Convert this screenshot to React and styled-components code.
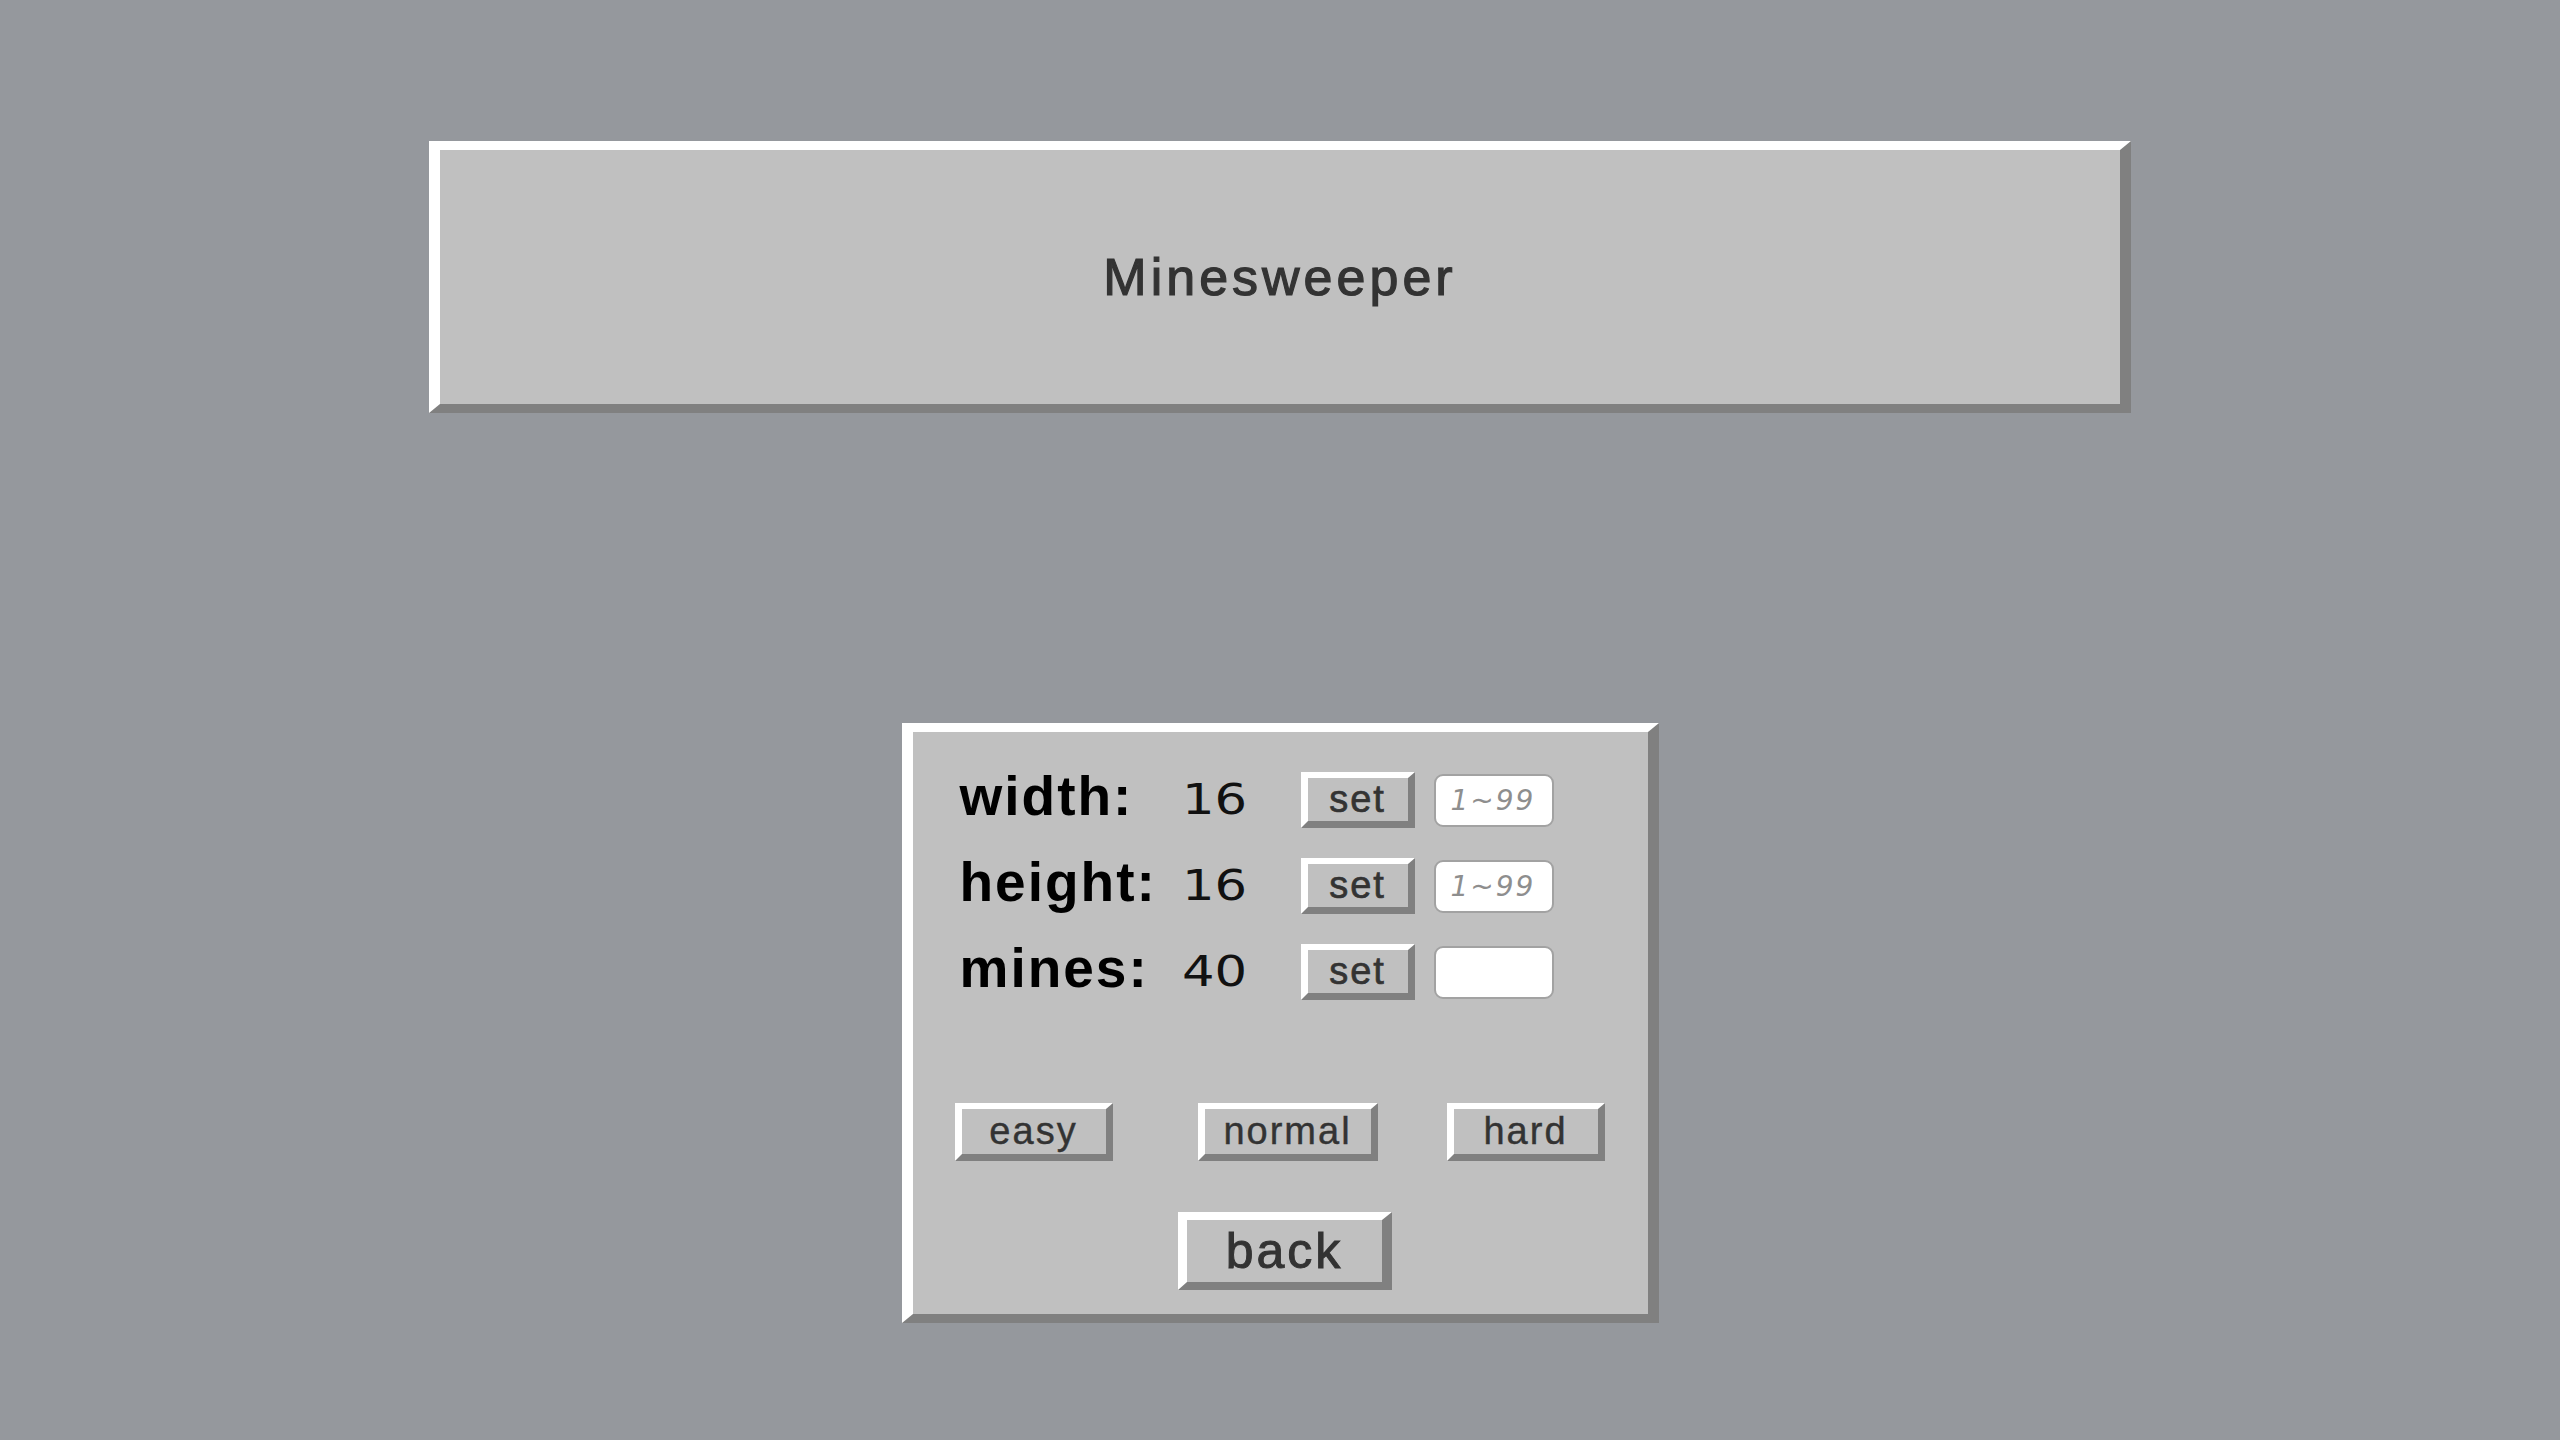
import React from "react";
import styled, { createGlobalStyle } from "styled-components";

const GlobalStyle = createGlobalStyle`
  html, body {
    margin: 0;
    padding: 0;
    background: #95989d;
  }
  body {
    font-family: "Liberation Sans", Arial, sans-serif;
  }
`;

const settings = [
  { label: "width:", value: 16, placeholder: "1~99" },
  { label: "height:", value: 16, placeholder: "1~99" },
  { label: "mines:", value: 40, placeholder: "" },
];

const levels = [
  { name: "easy", width: 158, shift: 0 },
  { name: "normal", width: 180, shift: 16 },
  { name: "hard", width: 158, shift: 0 },
];

const App = () => {
  return (
    <Page>
      <GlobalStyle />
      <TitleBox>
        <Title>Minesweeper</Title>
      </TitleBox>

      <Dialog>
        <Settings>
          {settings.map((s) => (
            <Row key={s.label}>
              <Label>{s.label}</Label>
              <ValueCell>
                <Value>{s.value}</Value>
              </ValueCell>
              <SetButton>set</SetButton>
              <NumberInput type="text" placeholder={s.placeholder} />
            </Row>
          ))}
        </Settings>

        <Levels>
          {levels.map((l) => (
            <LevelButton key={l.name} $w={l.width} $shift={l.shift}>
              {l.name}
            </LevelButton>
          ))}
        </Levels>

        <BackButton>back</BackButton>
      </Dialog>
    </Page>
  );
};

const raised = `
  box-sizing: border-box;
  background-color: #c0c0c0;
  border-style: solid;
  border-color: #ffffff #808080 #808080 #ffffff;
`;

const Page = styled.div`
  min-height: 1440px;
  box-sizing: border-box;
  padding-top: 141px;
  display: flex;
  flex-direction: column;
  align-items: center;
  gap: 310px;
`;

const TitleBox = styled.div`
  ${raised}
  width: 1702px;
  height: 272px;
  border-width: 9px 11px 9px 11px;
  display: flex;
  align-items: center;
  justify-content: center;
`;

const Title = styled.h1`
  margin: 0;
  font-family: "Liberation Sans", Arial, sans-serif;
  font-weight: 400;
  font-size: 52px;
  letter-spacing: 4px;
  color: #333333;
  -webkit-text-stroke: 1.2px #333333;
`;

const Dialog = styled.div`
  ${raised}
  width: 757px;
  height: 600px;
  border-width: 9px 11px 9px 11px;
  padding-top: 40px;
  display: flex;
  flex-direction: column;
`;

const Settings = styled.div`
  display: flex;
  flex-direction: column;
  gap: 30px;
  padding-left: 47px;
`;

const Row = styled.div`
  display: flex;
  align-items: center;
  height: 56px;
`;

const Label = styled.span`
  width: 222px;
  font-family: "Liberation Sans", Arial, sans-serif;
  font-weight: 700;
  font-size: 55px;
  letter-spacing: 2px;
  line-height: 1;
  padding-bottom: 8px;
  color: #000;
`;

const ValueCell = styled.div`
  width: 119px;
`;

const Value = styled.span`
  display: inline-block;
  font-family: "DejaVu Sans", sans-serif;
  font-size: 42px;
  line-height: 1;
  color: #111;
  transform: scaleX(1.22);
  transform-origin: left center;
`;

const buttonText = `
  font-family: "Liberation Sans", Arial, sans-serif;
  color: #333333;
  cursor: pointer;
  padding: 0;
  display: flex;
  align-items: center;
  justify-content: center;
  -webkit-text-stroke: 0.7px #333333;
`;

const SetButton = styled.button`
  ${raised}
  ${buttonText}
  width: 114px;
  height: 56px;
  border-width: 6px 7px 7px 7px;
  font-size: 38px;
  letter-spacing: 2px;
`;

const NumberInput = styled.input`
  box-sizing: border-box;
  width: 120px;
  height: 53px;
  margin-left: 19px;
  padding: 0 0 0 15px;
  border: 2px solid #a2a2a2;
  border-radius: 9px;
  background: #ffffff;
  font-family: "DejaVu Sans", sans-serif;
  font-style: italic;
  font-size: 28px;
  letter-spacing: 2px;
  color: #333;
  outline: none;

  &::placeholder {
    color: #8e8e8e;
    font-style: italic;
  }
`;

const Levels = styled.div`
  display: flex;
  justify-content: space-between;
  padding: 0 43px 0 42px;
  margin-top: 103px;
`;

const LevelButton = styled.button`
  ${raised}
  ${buttonText}
  width: ${(props) => props.$w}px;
  height: 58px;
  margin-left: ${(props) => props.$shift}px;
  border-width: 6px 7px 7px 7px;
  font-size: 38px;
  letter-spacing: 2px;
  -webkit-text-stroke: 0.4px #333333;
`;

const BackButton = styled.button`
  ${raised}
  ${buttonText}
  align-self: center;
  width: 214px;
  height: 78px;
  margin: 51px 0 0 10px;
  border-width: 8px 10px 8px 9px;
  font-size: 50px;
  letter-spacing: 3px;
  -webkit-text-stroke: 1px #333333;
`;

export default App;
